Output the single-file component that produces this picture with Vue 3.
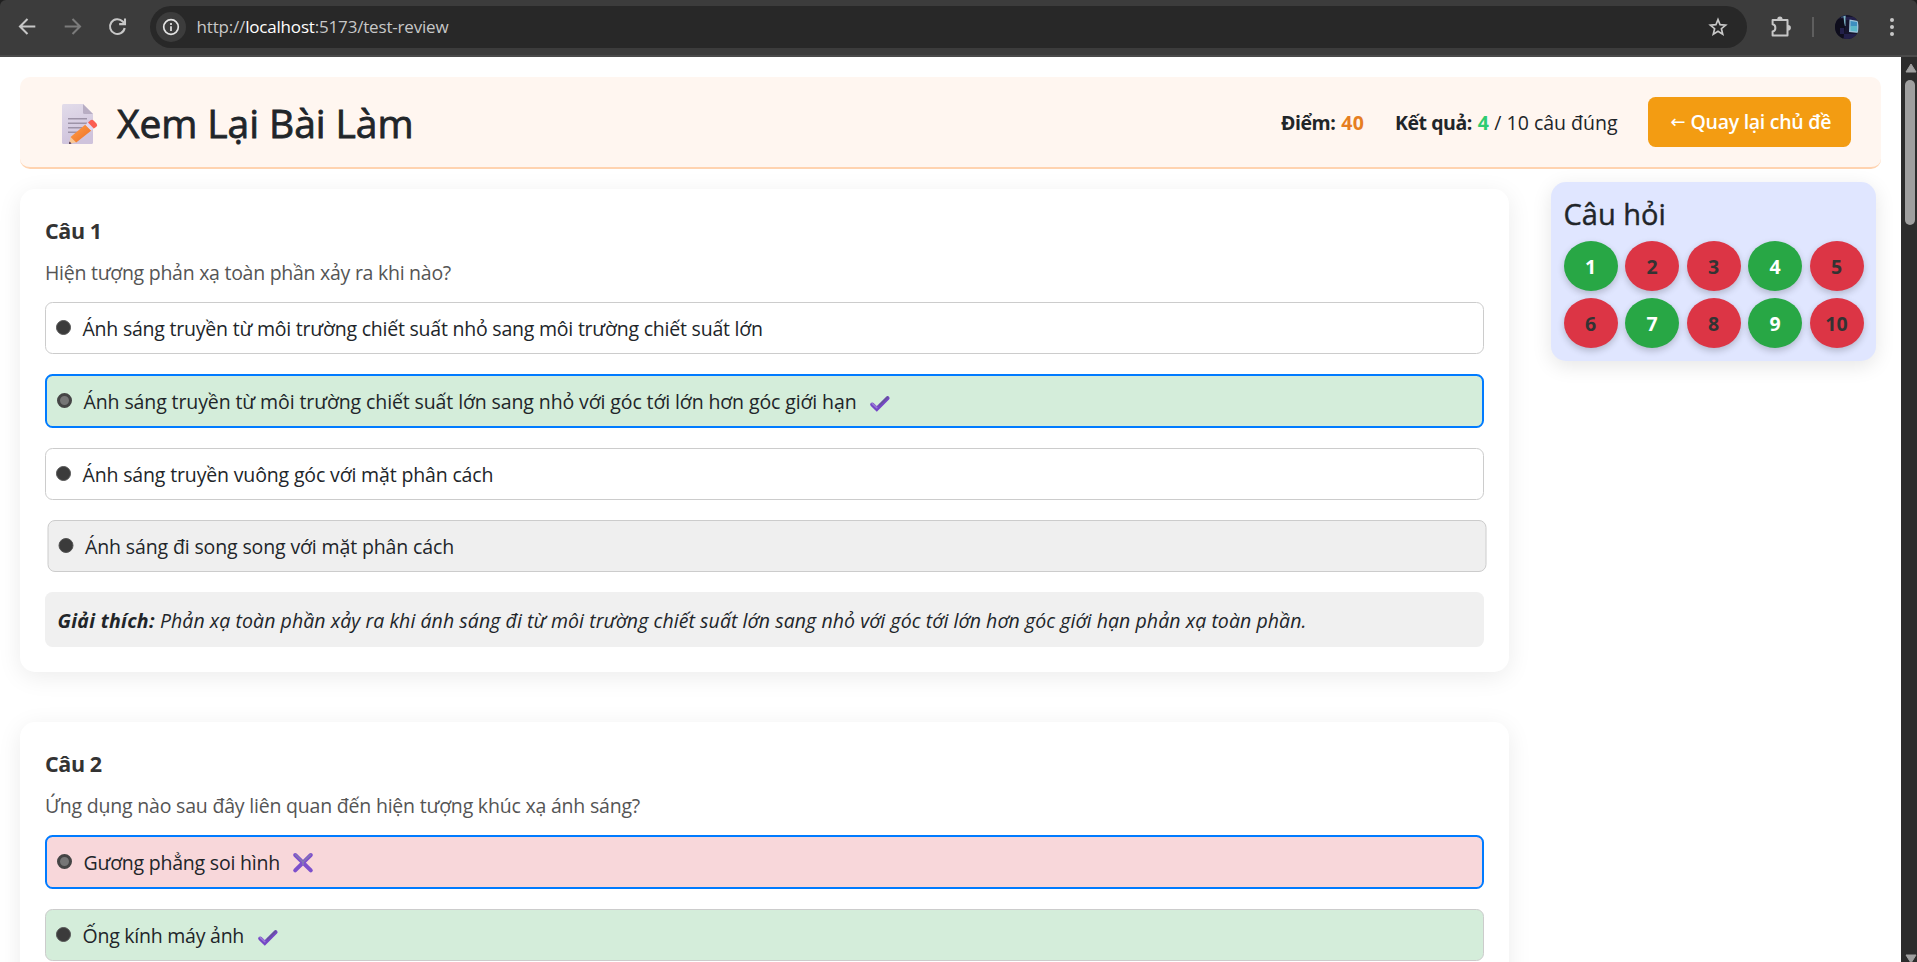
<script setup>
const questions = [
  {
    id: 1,
    text: 'Hiện tượng phản xạ toàn phần xảy ra khi nào?',
    tracking: -0.266,
    options: [
      { text: 'Ánh sáng truyền từ môi trường chiết suất nhỏ sang môi trường chiết suất lớn', tracking: -0.22 },
      { text: 'Ánh sáng truyền từ môi trường chiết suất lớn sang nhỏ với góc tới lớn hơn góc giới hạn', tracking: -0.107, state: 'correct', chosen: true, mark: 'check' },
      { text: 'Ánh sáng truyền vuông góc với mặt phân cách', tracking: -0.15 },
      { text: 'Ánh sáng đi song song với mặt phân cách', tracking: -0.13, state: 'hovered' },
    ],
    explanation: 'Phản xạ toàn phần xảy ra khi ánh sáng đi từ môi trường chiết suất lớn sang nhỏ với góc tới lớn hơn góc giới hạn phản xạ toàn phần.',
  },
  {
    id: 2,
    text: 'Ứng dụng nào sau đây liên quan đến hiện tượng khúc xạ ánh sáng?',
    tracking: -0.205,
    options: [
      { text: 'Gương phẳng soi hình', tracking: -0.22, state: 'wrong', chosen: true, mark: 'cross' },
      { text: 'Ống kính máy ảnh', tracking: -0.24, state: 'correct', mark: 'check' },
    ],
  },
]
const correct = [1, 4, 7, 9]
</script>

<template>
  <div class="window">
    <div class="toolbar">
      <div class="toolbar-face">
        <svg class="nav" viewBox="0 0 24 24"><path d="M19.5 12H5M12 4.8 4.8 12l7.2 7.2" /></svg>
        <svg class="nav off" viewBox="0 0 24 24"><path d="M4.500 12H19M12 4.800 19.200 12 12 19.200" /></svg>
        <svg class="nav" viewBox="0 0 24 24"><path d="M18.900 13.500A7.100 7.100 0 1 1 17 7.100L19 9.200M19.200 4.300V9.700H13.600" /></svg>
        <div class="omnibox">
          <span class="site">
            <svg viewBox="0 0 18 18"><circle cx="9" cy="9" r="7.300" /><path d="M9 8.200V13M9 5V6.900" /></svg>
          </span>
          <span class="url">http://<b>localhost</b>:5173/test-review</span>
          <svg class="star" viewBox="0 0 20 20"><path d="M10 2.600 12.100 7.700 17.600 8.100 13.400 11.700 14.700 17.100 10 14.200 5.300 17.100 6.600 11.700 2.400 8.100 7.900 7.700Z" /></svg>
        </div>
        <svg class="puzzle" viewBox="0 0 22 22">
          <path class="line" d="M2.600 4H17.500V19.500H2.600V15.500C6.300 14.800 6.300 9 2.600 8.300Z" />
          <path class="fill" d="M7.200 3.500a2.700 2.900 0 0 1 5.400 0ZM18 9a2.900 2.800 0 0 1 0 5.600Z" />
        </svg>
        <i class="sep"></i>
        <svg class="avatar" viewBox="0 0 24 24">
          <defs><clipPath id="face"><circle cx="12" cy="12" r="12" /></clipPath></defs>
          <g clip-path="url(#face)">
            <path fill="#16142c" d="M0 0h24v24H0z" />
            <path fill="#2c3d5c" d="M6 0h5v3H6z" />
            <path fill="#7fb4c4" d="M8.500 1h2v10h-1z" />
            <path fill="#0e0d1c" d="M3 4h5l2 8-2 12H0V8z" />
            <path fill="#23204a" d="M11 2h12v3H11zM5 13h4v6H5zM9 19h12v5H9z" />
            <path fill="#9cc3d8" d="M14.500 4.500 23.500 6v12L14 17z" />
            <path fill="#3d8fc0" d="M15.500 6 22 7v4.500H15.500z" />
            <path fill="#5bb8c9" d="M15.500 11h6.500V16.500L15.500 15.800z" />
          </g>
        </svg>
        <svg class="dots" viewBox="0 0 6 20"><circle cx="3" cy="3" r="2" /><circle cx="3" cy="10" r="2" /><circle cx="3" cy="17" r="2" /></svg>
      </div>
    </div>

    <div class="view">
      <main class="page">
        <header class="head">
          <h1>
            <svg class="memo" viewBox="0 0 36 41">
              <defs>
                <linearGradient id="paper" x1="0" y1="0" x2="0.300" y2="1"><stop offset="0" stop-color="#e2dcea" /><stop offset="1" stop-color="#cfc3dc" /></linearGradient>
                <linearGradient id="wood" x1="0" y1="0" x2="1" y2="1"><stop offset="0" stop-color="#ffa14a" /><stop offset="1" stop-color="#ee6c22" /></linearGradient>
              </defs>
              <path fill="url(#paper)" d="M1.500 0H21L31 10V38.500Q31 40 29.500 40H1.500Q0 40 0 38.500V1.500Q0 0 1.500 0Z" />
              <path fill="#b8adc3" d="M21 0 31 10H22.500Q21 10 21 8.500Z" />
              <path stroke="#9d93a8" stroke-width="1.500" d="M6 14.800H25M6 19.300H25M6 23.800H20M6 28.200H16" />
              <path fill="#f9c795" d="M7 40 8.800 32.800 14.200 38.300Z" />
              <path fill="#3a2748" d="M7 40 7.500 37.600 9.500 39.400Z" />
              <path fill="url(#wood)" d="M8.600 33 23.400 20.600 29.400 26.600 14.200 38.600Z" />
              <path fill="#e2d8ef" d="M23.200 20.800 26 18.400 31.800 24.600 29.200 26.800Z" />
              <path fill="#fb5d51" d="M26 18.400 28.500 16.200Q30.300 15 31.800 16.700L34.500 19.500Q36 21.300 34.400 22.700L31.800 24.600Z" />
            </svg>
            <span>Xem Lại Bài Làm</span>
          </h1>
          <div class="stats">
            <p class="score"><strong>Điểm:</strong> <b class="num orange">40</b></p>
            <p class="result"><strong>Kết quả:</strong> <b class="num green">4</b> <span>/ 10 câu đúng</span></p>
            <button class="back"><i>←</i><span>Quay lại chủ đề</span></button>
          </div>
        </header>

        <div class="body">
          <div class="list">
            <section v-for="q in questions" :key="q.id" class="card">
              <h2>Câu {{ q.id }}</h2>
              <p class="ask" :style="{ letterSpacing: q.tracking + 'px' }">{{ q.text }}</p>
              <div v-for="o in q.options" :key="o.text" class="option" :class="[o.state, { chosen: o.chosen }]">
                <i class="radio"></i>
                <span :style="{ letterSpacing: o.tracking + 'px' }">{{ o.text }}</span>
                <svg v-if="o.mark === 'check'" class="mark" viewBox="0 0 22 22">
                  <path stroke="#7547c6" d="M3.200 13.500 7.800 17.900 18.600 7.200" />
                  <path class="shine" stroke="#9a7bd6" d="M3.300 12.600 7.800 16.600" />
                  <path class="shine" stroke="#65549a" d="M10.500 14 18.600 6.200" />
                </svg>
                <svg v-if="o.mark === 'cross'" class="mark" viewBox="0 0 22 22">
                  <path stroke="#7d50cc" d="M3.200 3 18.800 18.400M18.800 3 3.200 18.400" />
                  <path class="shine" stroke="#8278b4" d="M3.600 2.700 11 10 18.400 2.700M11 10V12.500" />
                </svg>
              </div>
              <p v-if="q.explanation" class="explain"><strong>Giải thích:</strong> <span>{{ q.explanation }}</span></p>
            </section>
          </div>

          <aside class="panel">
            <h3>Câu hỏi</h3>
            <div class="grid">
              <span v-for="n in 10" :key="n" class="dot" :class="{ ok: correct.includes(n) }">{{ n }}</span>
            </div>
          </aside>
        </div>
      </main>

      <div class="scrollbar">
        <svg viewBox="0 0 12 10"><path d="M6 1 11 9H1Z" /></svg>
        <i class="thumb"></i>
        <svg class="down" viewBox="0 0 12 10"><path d="M6 9 1 1H11Z" /></svg>
      </div>
    </div>
  </div>
</template>

<style scoped>
.window {
  width: 1917px;
  height: 962px;
  overflow: hidden;
  display: flex;
  flex-direction: column;
  background: #fff;
  color: #212529;
  font: 19.5px/30px "Open Sans", "Noto Sans", sans-serif;
}
h1, h2, h3, p { margin: 0; }
i { font-style: normal; }

.toolbar { flex: none; height: 57px; background: #202020; }
.toolbar-face {
  box-sizing: border-box;
  height: 57px;
  display: flex;
  align-items: center;
  padding: 0 0 1px 15px;
  background: #3c3c3c;
  border-bottom: 2px solid #4a4a4a;
  border-radius: 6px 6px 0 0;
}
.nav { width: 25px; height: 25px; margin: 0 20px 1px 0; fill: none; stroke: #c7c7c7; stroke-width: 2; }
.nav.off { stroke: #7b7b7b; }
.omnibox {
  box-sizing: border-box;
  width: 1597px;
  height: 42px;
  display: flex;
  align-items: center;
  margin-bottom: 1px;
  padding: 0 19px 0 6px;
  border-radius: 21px;
  background: #282828;
}
.site { width: 30px; height: 30px; border-radius: 50%; background: #3c3c3c; display: flex; align-items: center; justify-content: center; }
.site svg { width: 18px; height: 18px; fill: none; stroke: #e3e3e3; stroke-width: 1.7; }
.url { flex: 1; margin-left: 10.5px; padding-top: 1px; font-size: 17px; letter-spacing: -0.18px; color: #c7c7c7; }
.url b { font-weight: 400; color: #fff; }
.star { width: 20px; height: 20px; fill: none; stroke: #c7c7c7; stroke-width: 1.7; }
.puzzle { width: 22px; height: 22px; margin: 0 0 1px 23px; }
.puzzle .line { fill: none; stroke: #c7c7c7; stroke-width: 2; stroke-linejoin: round; }
.puzzle .fill { fill: #c7c7c7; }
.sep { width: 2px; height: 20px; margin-left: 20px; background: #5e5e5e; }
.avatar { width: 24px; height: 24px; margin-left: 21px; }
.dots { width: 6px; height: 20px; margin-left: 30px; fill: #c7c7c7; }

.view { flex: 1; min-height: 0; display: flex; overflow: hidden; }
.page { flex: 1; padding: 20px 20px 0; }
.head {
  box-sizing: border-box;
  height: 92px;
  display: flex;
  justify-content: space-between;
  align-items: center;
  padding: 0 30px 0 42px;
  background: #fff6f0;
  border-bottom: 2px solid #ffd3b0;
  border-radius: 10px;
}
h1 { display: flex; align-items: center; font-size: 39px; line-height: 48px; font-weight: 500; letter-spacing: -0.08px; }
h1 span { padding-top: 2px; -webkit-text-stroke: 0.8px currentColor; }
.memo { width: 36px; height: 41px; margin: 4px 19px 0 0; }
.stats { display: flex; align-items: center; }
.stats p { padding-top: 2px; white-space: nowrap; }
.stats strong { letter-spacing: -0.45px; }
.num { margin-left: 0.7px; letter-spacing: 0.4px; }
.score { width: 114px; }
.result { width: 253px; }
.orange { color: #e67e22; }
.green { color: #2ecc71; }
.back {
  box-sizing: border-box;
  width: 203px;
  height: 50px;
  display: flex;
  align-items: center;
  padding: 0 0 0 19px;
  border: 0;
  border-radius: 7.5px;
  background: #f39c12;
  color: #fff;
  font: 600 19.5px/30px "Open Sans", "Noto Sans", sans-serif;
  letter-spacing: -0.28px;
  white-space: nowrap;
}
.back i { width: 25px; margin-left: -1.5px; font: 400 18px/30px "DejaVu Sans", sans-serif; }

.body { display: flex; align-items: flex-start; }
.list { flex: none; width: 1489px; display: flex; flex-direction: column; gap: 50px; padding-top: 20px; }
.card { padding: 25px; border-radius: 15px; background: #fff; box-shadow: 0 5px 25px rgba(0, 0, 0, 0.08); }
h2 { margin-bottom: 11px; font-size: 21.5px; line-height: 33px; font-weight: 700; letter-spacing: -0.4px; color: #333; }
.ask { margin-bottom: 14px; color: #555; }
.option {
  display: flex;
  align-items: center;
  margin-bottom: 20px;
  padding: 11px 10px 9px;
  border: 1px solid #ccc;
  border-radius: 7.5px;
  white-space: nowrap;
}
.option.correct { background: #d4edda; }
.option.wrong { background: #f8d7da; }
.option.hovered { background: #efefef; transform: translateX(2.5px); }
.option.chosen { border: 2px solid #007bff; }
.radio { box-sizing: border-box; width: 15px; height: 15px; margin: 0 11.5px 3px 0; border: 1.5px solid #555; border-radius: 50%; background: #3b3b3b; }
.chosen .radio { background: #767676; border: 3px solid #454545; }
.mark { width: 22px; height: 22px; margin-left: 12.5px; fill: none; stroke-width: 4; stroke-linecap: round; }
.mark .shine { stroke-width: 1.6; }
.explain { padding: 13.5px 12.5px 11.5px; border-radius: 7.5px; background: #f0f0f0; font-style: italic; white-space: nowrap; }
.explain strong { letter-spacing: 0.3px; }
.explain span { letter-spacing: 0.07px; }

.panel {
  flex: none;
  box-sizing: border-box;
  width: 325px;
  height: 179px;
  margin: 13px 0 0 42px;
  padding: 12.5px;
  border-radius: 15px;
  background: #e0e6ff;
  box-shadow: 0 5px 20px rgba(0, 0, 0, 0.1);
}
h3 { padding-top: 1px; margin-bottom: 9px; font-size: 29px; line-height: 36px; font-weight: 500; letter-spacing: 0; -webkit-text-stroke: 0.4px currentColor; }
.grid { display: grid; grid-template-columns: repeat(5, 54px); gap: 7px 7.5px; }
.dot { height: 50px; border-radius: 50%; background: #dc3545; color: #333; font-weight: 700; line-height: 51px; text-align: center; box-shadow: 0 3px 7px rgba(0, 0, 0, 0.2); }
.dot.ok { background: #28a745; color: #fff; }

.scrollbar { width: 16px; display: flex; flex-direction: column; align-items: center; background: #2c2c2c; }
.scrollbar svg { width: 12px; height: 10px; margin: 6px 0 7px 3px; fill: #9f9f9f; stroke: #9f9f9f; stroke-linejoin: round; }
.thumb { width: 10px; height: 145px; margin-left: 2px; border-radius: 5px; background: #9f9f9f; }
.scrollbar .down { margin: auto 0 -2px 3px; }
</style>

<style>
body { overflow: hidden; }
</style>
